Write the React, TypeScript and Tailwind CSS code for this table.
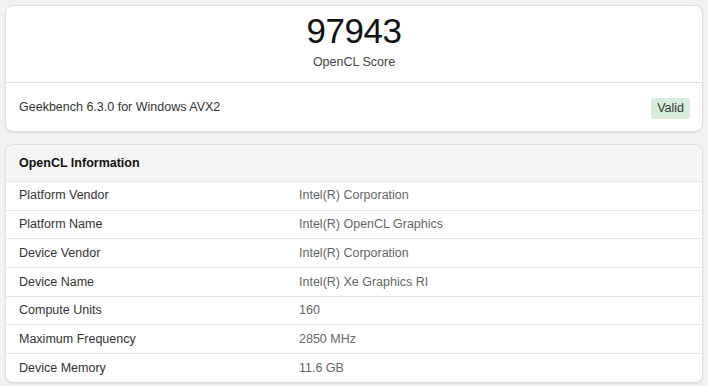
import React from 'react';

const rows: [string, string][] = [
  ['Platform Vendor', 'Intel(R) Corporation'],
  ['Platform Name', 'Intel(R) OpenCL Graphics'],
  ['Device Vendor', 'Intel(R) Corporation'],
  ['Device Name', 'Intel(R) Xe Graphics RI'],
  ['Compute Units', '160'],
  ['Maximum Frequency', '2850 MHz'],
  ['Device Memory', '11.6 GB'],
];

export default function App() {
  return (
    <div
      className="w-[708px] h-[386px] bg-[#f1f1f1] px-[5px] pt-[5px] overflow-hidden"
      style={{ fontFamily: '"Liberation Sans", Arial, sans-serif' }}
    >
      {/* score card */}
      <section className="bg-white rounded-lg border border-[#dedede] shadow-[0_1px_2px_rgba(0,0,0,0.08)]">
        <div className="h-[77px] flex flex-col items-center border-b border-[#dcdcdc]">
          <div className="text-[35px] leading-none text-[#111] mt-[7px] tracking-[-0.5px]">97943</div>
          <div className="text-[12.5px] leading-[15px] text-[#444] mt-[7px]">OpenCL Score</div>
        </div>
        <div className="h-[48px] flex items-center justify-between pl-[13px] pr-[12px]">
          <span className="text-[12.5px] text-[#333]">Geekbench 6.3.0 for Windows AVX2</span>
          <span className="bg-[#d7eddc] text-[#333] text-[12.5px] rounded-[3px] px-[6px] h-[21px] flex items-center mt-[2px]">
            Valid
          </span>
        </div>
      </section>

      {/* info table */}
      <section className="mt-[12px] bg-white rounded-lg border border-[#dedede] shadow-[0_1px_2px_rgba(0,0,0,0.08)] overflow-hidden">
        <div className="h-[36px] bg-[#f5f5f5] flex items-center pl-[13px] rounded-t-lg">
          <span className="text-[12.5px] font-bold text-[#111]">OpenCL Information</span>
        </div>
        {rows.map(([k, v]) => (
          <div key={k} className="h-[28.7px] flex items-center border-t border-[#e6e6e6] text-[12.5px]">
            <span className="w-[293px] pl-[13px] text-[#333]">{k}</span>
            <span className="text-[#666]">{v}</span>
          </div>
        ))}
      </section>
    </div>
  );
}
